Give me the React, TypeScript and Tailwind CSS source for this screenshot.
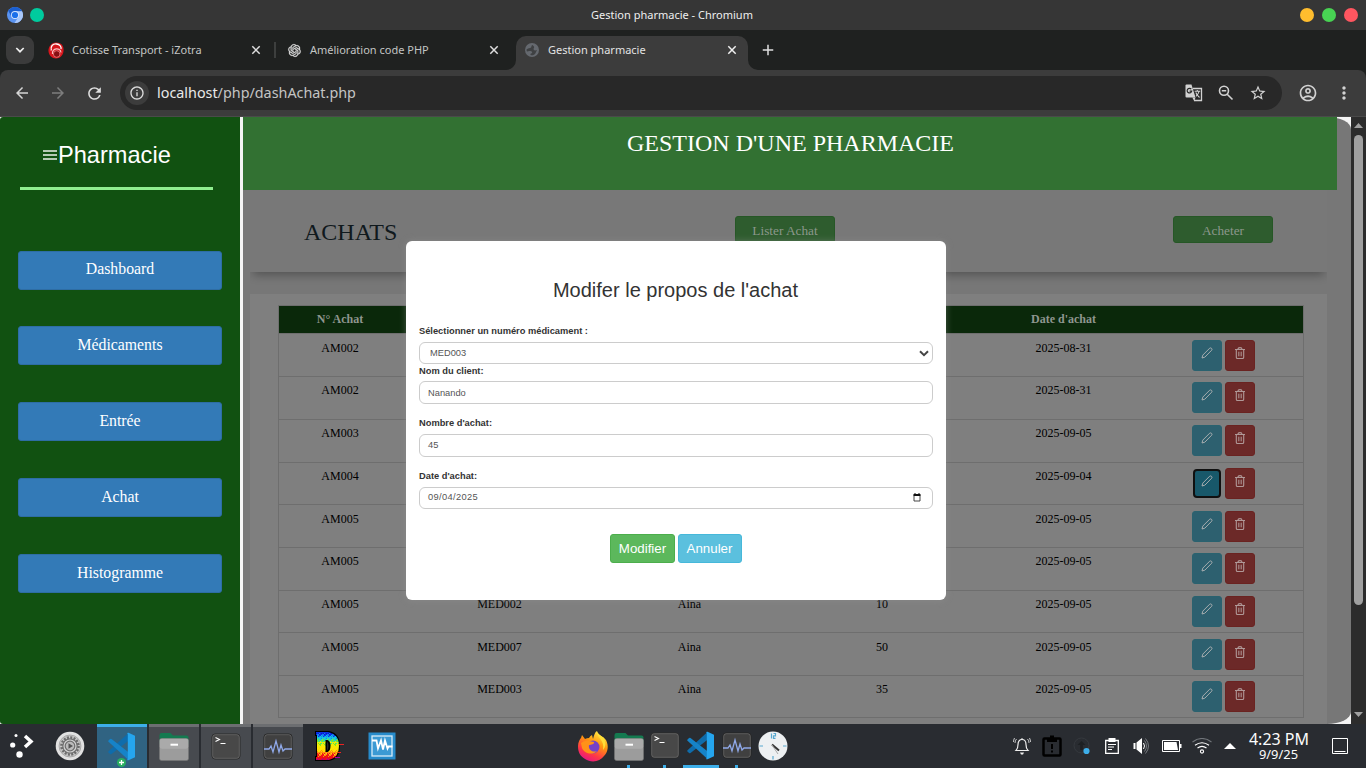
import React from "react";
import { MdArrowBack, MdArrowForward, MdRefresh, MdInfoOutline, MdStarBorder, MdMoreVert, MdAdd, MdOutlineAccountCircle } from "react-icons/md";
import { RiOpenaiFill } from "react-icons/ri";

const sans = "font-['Liberation_Sans',sans-serif]";
const serif = "font-['Liberation_Serif',serif]";

/* ---------- browser chrome ---------- */

function TitleBar() {
  return (
    <div className="flex h-[30px] items-center bg-[#363636] text-[11px] text-[#efefef]">
      <div className="flex w-[200px] items-center gap-[7px] pl-[7px]">
        <svg width="16" height="16" viewBox="0 0 16 16">
          <circle cx="8" cy="8" r="8" fill="#5a93f0" />
          <path d="M8 4.2h7A8 8 0 0 0 1.2 3.8L4.7 10z" fill="#1b5fd0" />
          <path d="M15 4.2H8l3.3 5.7L7.6 16A8 8 0 0 0 15 4.2z" fill="#a9c8fb" />
          <circle cx="8" cy="8" r="4" fill="#d5e4fd" />
          <circle cx="8" cy="8" r="3.1" fill="#1a6fea" />
        </svg>
        <div className="h-[14px] w-[14px] rounded-full bg-[#00cb9e]" />
      </div>
      <div className="flex-1 pr-[44px] text-center">Gestion pharmacie - Chromium</div>
      <div className="flex w-[178px] items-center justify-end gap-2 pr-2">
        <div className="h-[14px] w-[14px] rounded-full bg-[#ffbd2e]" />
        <div className="h-[14px] w-[14px] rounded-full bg-[#48d353]" />
        <div className="h-[14px] w-[14px] rounded-full bg-[#ff5660]" />
      </div>
    </div>
  );
}

function TabClose({ color }: { color: string }) {
  return (
    <svg width="14" height="14" viewBox="0 0 14 14">
      <path d="M3.300 3.300l7.400 7.400M10.700 3.300l-7.400 7.400" stroke={color} strokeWidth="1.500" />
    </svg>
  );
}

function TabStrip() {
  return (
    <div className="flex h-[40px] items-center bg-[#1f2120] text-[11px] text-[#c3c5c4]">
      <div className="ml-[6px] flex h-7 w-7 items-center justify-center rounded-[9px] bg-[#3b3b3b]">
        <svg width="10" height="8" viewBox="0 0 10 8"><path d="M1.300 2L5 5.700 8.700 2" fill="none" stroke="#eee" strokeWidth="1.700" /></svg>
      </div>
      <div className="flex w-[240px] items-center pl-[14px] pr-[11px]">
        <svg width="16" height="17" viewBox="0 0 16 17">
          <path d="M8 .5c5 0 7.800 3 7.600 7.500C15.500 13.500 12 16.500 8 16.500S1 13.500.5 9.500 3 .5 8 .5z" fill="#d8161c" />
          <path d="M3.300 8.500C2 4 5 1.700 8.500 2s5 2.800 4.500 5" fill="none" stroke="#fff" strokeWidth="1.300" />
          <path d="M4.500 12c-1-6 8-7 8.500-1.500" fill="none" stroke="#f6c4c4" strokeWidth="1.200" />
          <circle cx="8.700" cy="12" r="3.300" fill="#870e12" stroke="#ec8585" strokeWidth=".8" />
        </svg>
        <span className="ml-2 flex-1 whitespace-nowrap">Cotisse Transport - iZotra</span>
        <TabClose color="#dedede" />
      </div>
      <div className="h-4 w-[2px] bg-[#3d3f3e]" />
      <div className="flex w-[240px] items-center pl-[11px] pr-[15px]">
        <RiOpenaiFill size={15} color="#e2e2e2" stroke="#e2e2e2" strokeWidth={0.5} />
        <span className="ml-2 flex-1 whitespace-nowrap">Amélioration code PHP</span>
        <TabClose color="#dedede" />
      </div>
      <div className="relative flex h-[34px] w-[232px] items-center self-end rounded-t-[10px] bg-[#3c3c3c] pb-[6px] pl-[9px] pr-[9px] text-[#e3e3e3]">
        <svg className="absolute bottom-0 -left-[10px]" width="10" height="10"><path d="M10 0A10 10 0 0 1 0 10H10z" fill="#3c3c3c" /></svg>
        <svg className="absolute bottom-0 -right-[10px]" width="10" height="10"><path d="M0 0A10 10 0 0 0 10 10H0z" fill="#3c3c3c" /></svg>
        <svg width="14" height="14" viewBox="0 0 14 14">
          <circle cx="7" cy="7" r="7" fill="#65696f" />
          <path d="M7.500 2C6 2.200 6.800 3.900 6 4.600 5 5.400 3 5.200 1.500 6.500c0 .8.200 1.400.5 2 1.800-.9 4.200-.8 5 .3.600 1-.4 1.700-1.500 2v1.300c2 .6 4-.1 4.800-1.600L12 7c-1.500.800-2.900.6-3.400-.6-.3-1 .7-1.400.5-2.400-.2-.8-.9-1.300-1.600-2z" fill="#3f4143" />
        </svg>
        <span className="ml-[9px] flex-1 whitespace-nowrap">Gestion pharmacie</span>
        <TabClose color="#f0f0f0" />
      </div>
      <div className="ml-[11px]"><MdAdd size={18} color="#e0e0e0" /></div>
    </div>
  );
}

function TranslateIcon() {
  return (
    <svg width="18" height="18" viewBox="0 0 18 18">
      <path d="M8 4.500h8.500v12H9" fill="none" stroke="#d2d2d2" strokeWidth="1.300" />
      <path d="M1.500.5h5l4 13h-9q-1 0-1-1v-11q0-1 1-1z" fill="#d2d2d2" />
      <path d="M7.300 13.500h3.200l-1.200 3.700z" fill="#d2d2d2" />
      <path d="M6.300 5.200a2.300 2.300 0 1 0 .4 2H4.600" fill="none" stroke="#282828" strokeWidth="1.200" />
      <path d="M9.700 7.300h5.500M12.300 6v1.300M14 7.500q-.7 3-3 4.800M10.800 8.500q1.200 2.700 3.700 5" fill="none" stroke="#d2d2d2" strokeWidth="1.100" />
    </svg>
  );
}

function Toolbar() {
  return (
    <div className="bg-[#1f2120]">
      <div className="flex h-[47px] items-center rounded-t-[8px] border-b border-[#4a4a4a] bg-[#3c3c3c]">
        <div className="flex w-[120px] items-center gap-[18px] pl-[13px]">
          <MdArrowBack size={18} color="#d5d5d5" />
          <MdArrowForward size={18} color="#7d7d7d" />
          <MdRefresh size={19} color="#dedede" />
        </div>
        <div className="flex h-[34px] w-[1162px] items-center rounded-full bg-[#282828] pl-[5px] pr-[15px]">
          <div className="flex h-6 w-6 items-center justify-center rounded-full bg-[#3c3c3c]">
            <MdInfoOutline size={16} color="#dcdcdc" />
          </div>
          <div className="ml-2 flex-1 text-[14.350px] text-[#c4c4c4]"><span className="text-[#e9e9e9]">localhost</span>/php/dashAchat.php</div>
          <div className="flex items-center gap-[15px] text-[#d2d2d2]">
            <TranslateIcon />
            <svg width="16" height="16" viewBox="0 0 16 16" fill="none" stroke="#d2d2d2" strokeWidth="1.600">
              <circle cx="6" cy="5.800" r="4.500" /><path d="M9.200 9.200l5.300 5.300M3.800 5.800h4.400" />
            </svg>
            <MdStarBorder size={18} />
          </div>
        </div>
        <div className="ml-[16px] flex items-center gap-[16px] text-[#d2d2d2]">
          <MdOutlineAccountCircle size={20} />
          <MdMoreVert size={20} />
        </div>
      </div>
    </div>
  );
}

/* ---------- page ---------- */

const menu = [
  { label: "Dashboard", cls: "mt-0 leading-[34px]" },
  { label: "Médicaments", cls: "mt-[36px] leading-[36px]" },
  { label: "Entrée", cls: "mt-[37px] leading-[36px]" },
  { label: "Achat", cls: "mt-[37px] leading-[36px]" },
  { label: "Histogramme", cls: "mt-[37px] leading-[36px]" },
];

function Sidebar() {
  return (
    <aside className="w-[240px] shrink-0 rounded-l-[3px] bg-[#115111]">
      <div className={`mx-[20px] flex h-[73px] w-[193px] items-start border-b-[3px] border-[#90ee90] pl-[23px] pt-[22px] text-[23.600px] leading-[32px] text-white ${sans}`}>
        <svg className="mt-[11px] mr-px shrink-0" width="14" height="10" viewBox="0 0 14 10">
          <path d="M0 1h14M0 5h14M0 9h14" stroke="#b5cab5" strokeWidth="2" />
        </svg>
        Pharmacie
      </div>
      <nav className={`mx-[18px] mt-[61px] text-[15.800px] text-white ${serif}`}>
        {menu.map((m) => (
          <div key={m.label} className={`h-[39px] rounded-[3px] border border-[#2e6da4] bg-[#337ab7] text-center ${m.cls}`}>{m.label}</div>
        ))}
      </nav>
    </aside>
  );
}

function PencilIcon() {
  return (
    <svg width="12" height="12" viewBox="0 0 12 12" fill="none" stroke="#a6adaf" strokeWidth="1">
      <path d="M1 11l.8-2.900L8.700 1.200q1.100-.7 1.900.2.800.900.1 1.800L3.800 10.200z" strokeLinejoin="round" />
    </svg>
  );
}
function TrashIcon() {
  return (
    <svg width="12" height="12" viewBox="0 0 12 12" fill="none" stroke="#b09897" strokeWidth="1">
      <path d="M1 2.500h10M4 2.300Q4 .6 6 .6t2 1.700M2.300 2.700v7.600q0 1.200 1.200 1.200h5q1.200 0 1.200-1.200V2.700" strokeWidth="1.100" />
      <path d="M4.500 4.700v4.600M6 4.700v4.600M7.500 4.700v4.600" strokeWidth=".7" />
    </svg>
  );
}

type Row = { n: string; med?: string; client?: string; qty?: string; date: string; cls: string; focus?: boolean };
const rows: Row[] = [
  { n: "AM002", date: "2025-08-31", cls: "h-[43px] pt-[6px]" },
  { n: "AM002", date: "2025-08-31", cls: "h-[43px] pt-[5px]" },
  { n: "AM003", date: "2025-09-05", cls: "h-[43px] pt-[5px]" },
  { n: "AM004", date: "2025-09-04", cls: "h-[42px] pt-[5px]", focus: true },
  { n: "AM005", date: "2025-09-05", cls: "h-[43px] pt-[6px]" },
  { n: "AM005", date: "2025-09-05", cls: "h-[43px] pt-[5px]" },
  { n: "AM005", med: "MED002", client: "Aina", qty: "10", date: "2025-09-05", cls: "h-[42px] pt-[5px]" },
  { n: "AM005", med: "MED007", client: "Aina", qty: "50", date: "2025-09-05", cls: "h-[43px] pt-[6px]" },
  { n: "AM005", med: "MED003", client: "Aina", qty: "35", date: "2025-09-05", cls: "h-[42px] pt-[5px]" },
];
const cols = "grid grid-cols-[122px_196px_184px_202px_161px_159px]";

function PurchaseTable() {
  return (
    <div className={`w-[1026px] border border-[#6e6e6e] text-center text-[12px] text-black ${serif}`}>
      <div className={`${cols} h-[27px] bg-[#0a280a] font-bold leading-[26px] text-[#8f968f]`}>
        <span>N° Achat</span><span /><span /><span /><span>Date d'achat</span><span />
      </div>
      {rows.map((r, i) => (
        <div key={i} className={`${cols} border-t border-[#6e6e6e] leading-[16px] ${r.cls}`}>
          <span>{r.n}</span>
          <span className="pl-px">{r.med}</span>
          <span className="pl-px">{r.client}</span>
          <span>{r.qty}</span>
          <span>{r.date}</span>
          <div className="flex justify-center gap-[3px]">
            {r.focus ? (
              <div className="h-[31px] w-[30px] p-px">
                <div className="flex h-[29px] w-[28px] justify-center rounded-[4px] border-2 border-[#101010] bg-[#18586a] pt-[4px]"><PencilIcon /></div>
              </div>
            ) : (
              <div className="flex h-[31px] w-[30px] justify-center rounded-[3px] border border-[#2a626f] bg-[#2d606f] pt-[6px]"><PencilIcon /></div>
            )}
            <div className="flex h-[31px] w-[30px] justify-center rounded-[3px] border border-[#6a2321] bg-[#6c2928] pt-[6px]"><TrashIcon /></div>
          </div>
        </div>
      ))}
    </div>
  );
}

const label = "text-[9.300px] font-bold text-[#333]";
const field = "flex w-full items-center rounded-[6px] border border-[#ccc] bg-white text-[9.300px] text-[#555]";

function EditDialog() {
  return (
    <div className={`absolute left-[163px] top-[124.400px] h-[358.400px] w-[540px] rounded-[6px] bg-white px-[13px] pt-[34.600px] text-[#333] shadow-[0_0_7px_rgba(150,150,150,0.45)] ${sans}`}>
      <h2 className="pr-px text-center text-[20px] leading-[28px]">Modifer le propos de l'achat</h2>
      <div className={`${label} mt-[20px] h-[14px] leading-[14px]`}>Sélectionner un numéro médicament :</div>
      <div className={`${field} mt-[4px] h-[22.500px] justify-between pl-[10px] pr-[3px]`}>
        <span className="pt-px">MED003</span>
        <svg width="10" height="7" viewBox="0 0 10 7"><path d="M1 1.200l4 3.900 4-3.900" fill="none" stroke="#444" strokeWidth="2" /></svg>
      </div>
      <div className={`${label} mt-[0.500px] h-[12px] leading-[12px]`}>Nom du client:</div>
      <div className={`${field} mt-[4px] h-[23px] pl-[8px]`}><span className="pt-[2px]">Nanando</span></div>
      <div className={`${label} mt-[13px] h-[12px] leading-[12px]`}>Nombre d'achat:</div>
      <div className={`${field} mt-[5px] h-[23px] pl-[8px]`}>45</div>
      <div className={`${label} mt-[13px] h-[12px] leading-[12px]`}>Date d'achat:</div>
      <div className={`${field} mt-[5px] h-[22px] justify-between pl-[8px] pr-[11px]`}>
        <span className="tracking-[0.350px]">09/04/2025</span>
        <svg className="-mt-px" width="8" height="9" viewBox="0 0 8 9"><path d="M1 1.500h6V8H1z" fill="none" stroke="#333" strokeWidth=".9" /><path d="M.6 1h6.800v2H.6zM1.500 0h1v1h-1zM5.500 0h1v1h-1z" fill="#111" /></svg>
      </div>
      <div className="mt-[25px] flex justify-center gap-[3px] text-[13.300px] text-white">
        <div className="h-[29px] w-[65px] rounded-[3px] border border-[#4cae4c] bg-[#5cb85c] text-center leading-[27px]">Modifier</div>
        <div className="h-[29px] w-[64px] rounded-[3px] border border-[#46b8da] bg-[#5bc0de] pr-px text-center leading-[27px]">Annuler</div>
      </div>
    </div>
  );
}

function PageScrollbar() {
  return (
    <div className="flex w-[15px] shrink-0 flex-col items-center bg-[#2c2c2c]">
      <svg className="mt-[6px]" width="9" height="5"><path d="M0 5l4.500-5L9 5z" fill="#a0a0a0" /></svg>
      <div className="mt-[7px] h-[470px] w-[9px] rounded-full bg-[#a0a0a0]" />
      <svg className="mt-auto mb-[7px]" width="9" height="5"><path d="M0 0l4.500 5L9 0z" fill="#a0a0a0" /></svg>
    </div>
  );
}

function Page() {
  return (
    <div className="flex h-[607px] overflow-hidden bg-[#f4f4f4]">
      <Sidebar />
      <main className="relative ml-[3px] w-[1108px] shrink-0 rounded-r-[24px_12px] bg-[#777]">
        <header className={`h-[73px] w-[1094px] bg-[#327132] pt-[12px] pl-px text-center text-[24px] leading-[28px] text-white ${serif}`}>GESTION D'UNE PHARMACIE</header>
        <div className="ml-[7px] h-[104px] w-[1077px] overflow-hidden">
          <section className={`flex h-[82px] bg-[#787878] pl-[54px] shadow-[0_6px_9px_-3px_rgba(0,0,0,0.3)] ${serif}`}>
            <h1 className="w-[431px] pt-[27px] text-[24px] leading-[30px] text-[#10191d]">ACHATS</h1>
            <div className="mt-[26px] h-[27px] w-[100px] rounded-[3px] border border-[#265726] bg-[#2e5c2e] text-center text-[13.300px] leading-[28px] text-[#8c978c]">Lister Achat</div>
            <div className="ml-[338px] mt-[26px] h-[27px] w-[100px] rounded-[3px] border border-[#265726] bg-[#2e5c2e] text-center text-[13.300px] leading-[28px] text-[#8c978c]">Acheter</div>
          </section>
        </div>
        <section className="ml-[7px] h-[430px] w-[1077px] bg-[#7f7f7f] pl-[28px] pt-[11px]">
          <PurchaseTable />
        </section>
        <EditDialog />
      </main>
      <PageScrollbar />
    </div>
  );
}

/* ---------- desktop panel ---------- */

function CodeIcon({ badge }: { badge?: boolean }) {
  return (
    <svg className="overflow-visible" width="30" height="32" viewBox="0 0 30 32">
      <path d="M21.500 2L1.500 20.300q-.6.700 0 1.300l1.600 1.500q.7.500 1.400 0L21.500 9.800z" fill="#0f6cab" />
      <path d="M21.500 29L1.500 10.700q-.6-.7 0-1.300l1.600-1.500q.7-.5 1.400 0L21.500 21.200z" fill="#1683c8" />
      <path d="M21.500 1.800l6.500 3v21.400l-6.500 3q-1 .3-1.700-.5.9.2 1-1V3.300q-.1-1.200-1-1 .7-.8 1.700-.5z" fill="#25a5ee" />
      {badge && <><circle cx="14.500" cy="31.500" r="4.500" fill="#27ae60" /><path d="M14.500 29v5M12 31.500h5" stroke="#fff" strokeWidth="1.300" /></>}
    </svg>
  );
}
function FilesIcon() {
  return (
    <svg width="32" height="30" viewBox="0 0 32 30">
      <path d="M1.500 3q0-2 2-2h9l2.500 2.500h13.500q2 0 2 2V12h-29z" fill="#147a50" />
      <rect x="1.500" y="6.500" width="29" height="22" rx="2" fill="#9c9c9c" stroke="#777" strokeWidth=".6" />
      <rect x="1.800" y="6.800" width="28.400" height="10" rx="2" fill="#aaa" />
      <path d="M12.500 12.700h7.500" stroke="#fff" strokeWidth="2" />
    </svg>
  );
}
function TerminalIcon() {
  return (
    <svg width="30" height="28" viewBox="0 0 30 28">
      <rect x="1" y="1" width="28" height="25" rx="3" fill="#484848" stroke="#2a2a2a" />
      <rect x="1.700" y="1.700" width="26.600" height="23.600" rx="2.500" fill="none" stroke="#747474" strokeWidth=".6" />
      <path d="M4.500 4.500l4 2-4 2M9.500 10.500h5" fill="none" stroke="#fff" strokeWidth="1.100" />
    </svg>
  );
}
function MonitorIcon() {
  return (
    <svg width="30" height="28" viewBox="0 0 30 28">
      <rect x="1" y="1" width="28" height="25" rx="3" fill="#404040" stroke="#242424" />
      <rect x="1.700" y="1.700" width="26.600" height="23.600" rx="2.500" fill="none" stroke="#747474" strokeWidth=".6" />
      <path d="M1 16h5l2-3 2 6 3-11 3 11 2-7 2 6 2-2h7" fill="none" stroke="#8fa8e8" strokeWidth="1.300" />
    </svg>
  );
}

const bandColors = ["#0a18c8", "#0a30e8", "#1080f0", "#10c0e8", "#38e0a0", "#80e820", "#e8ec10", "#ffea00", "#ffe600", "#ffdc00", "#ff9010", "#f01818", "#f01010", "#c00070"];
const pixels = Array.from({ length: 28 * 30 }, (_, i) => {
  const x = i % 28;
  const y = Math.floor(i / 28);
  const jitter = ((x * 7 + y * 13 + ((x * y) % 5) * 3) % 5) - 2;
  const band = Math.max(0, Math.min(bandColors.length - 1, Math.round(y / 2.2 + jitter * 0.5)));
  return { x, y, fill: bandColors[band] };
});

function PixelDIcon() {
  return (
    <svg width="32" height="32" viewBox="0 0 32 32">
      <defs><clipPath id="d-shape"><path clipRule="evenodd" d="M3 2h12q11 2 11 14T16 30H3v-3h1V5H3zM12.500 10v12h2q3-1 3-6t-3-6z" /></clipPath></defs>
      <path fillRule="evenodd" d="M2 1h14q11 2 11 15T16 31H2v-5h1V6H2zM14 11.500v9q1.500-1 1.500-4.500T14 11.500z" fill="#000" />
      <g clipPath="url(#d-shape)" shapeRendering="crispEdges">{pixels.map((p, i) => <rect key={i} x={p.x} y={p.y + 1} width="1" height="1" fill={p.fill} />)}</g>
      <path d="M26 14.500h5M25 22.500h3" stroke="#e22" />
      <path d="M22 27.500h5" stroke="#a0a" />
    </svg>
  );
}

function LauncherIcons() {
  return (
    <>
      <div className="flex w-[44px] justify-center">
        <svg width="26" height="28" viewBox="0 0 26 28" fill="#fff">
          <circle cx="7" cy="3.500" r="1.500" /><circle cx="3.700" cy="13" r="2.600" /><circle cx="10.500" cy="22.500" r="3.200" />
          <path d="M16 4l6 5.500-6 5.500" fill="none" stroke="#fff" strokeWidth="3.500" />
        </svg>
      </div>
      <div className="mr-px flex w-[52px] justify-center">
        <svg width="30" height="30" viewBox="0 0 30 30">
          <circle cx="15" cy="15" r="14.300" fill="#e1e1e1" />
          <circle cx="15" cy="15" r="11" fill="#c9c9c9" stroke="#8c8c8c" strokeWidth=".6" />
          <circle cx="15" cy="15" r="8.500" fill="none" stroke="#6d6d6d" strokeWidth="2.600" strokeDasharray="2 1.337" />
          <circle cx="15" cy="15" r="7.200" fill="#d2d2d2" stroke="#6d6d6d" strokeWidth="1.200" />
          <circle cx="15" cy="15" r="4.800" fill="#bbb" stroke="#6d6d6d" strokeWidth="1.200" />
          <path d="M13.500 12.200v5.600l4.500-2.800z" fill="#555" />
        </svg>
      </div>
    </>
  );
}

const openTask = "flex h-[44px] w-[50px] items-center justify-center border-t-[3px] pb-px";

function Taskbar() {
  return (
    <footer className="flex h-[44px] items-center bg-[#292c31] text-[#fcfcfc]">
      <LauncherIcons />
      <div className="flex gap-[2px] bg-[#292c31]">
        <div className={`${openTask} border-[#3daee9] bg-[#306382]`}><CodeIcon badge /></div>
        <div className={`${openTask} border-[#6c6e71] bg-[#474a4f]`}><FilesIcon /></div>
        <div className={`${openTask} border-[#6c6e71] bg-[#474a4f]`}><TerminalIcon /></div>
        <div className={`${openTask} border-[#6c6e71] bg-[#474a4f]`}><MonitorIcon /></div>
      </div>
      <div className="flex w-[52px] justify-center"><PixelDIcon /></div>
      <div className="flex w-[54px] justify-center">
        <svg width="28" height="28" viewBox="0 0 28 28">
          <rect x=".5" y=".5" width="27" height="27" fill="#278bcb" />
          <rect x="4" y="4" width="20" height="20" fill="#3c9ad4" stroke="#d7ecf8" strokeWidth="1.300" />
          <path d="M4 8.500h4.500l1.500 8 3-8 2 9 2-9 2.500 8 1-2h4" fill="none" stroke="#fff" strokeWidth="1.800" />
        </svg>
      </div>
      <div className="ml-[166px] flex h-[44px]">
        <div className="flex w-9 items-center justify-center">
          <svg width="32" height="33" viewBox="0 0 32 33">
            <defs>
              <linearGradient id="fox" x1=".8" y1="0" x2=".3" y2="1"><stop offset="0" stopColor="#fff44f" /><stop offset=".4" stopColor="#ff980e" /><stop offset=".75" stopColor="#ff3647" /><stop offset="1" stopColor="#e31587" /></linearGradient>
            </defs>
            <path d="M1 16C1 12 3 9 4 8l1-3 3 4q2-1 4-1 1-2 3-3l1 4c1-4 2-7 4-8 1 4 5 5 7 7l2 2c3 6 2 12-2 16C23 32 14 33 8 29 3 26 1 22 1 16z" fill="url(#fox)" />
            <circle cx="16" cy="17" r="6.500" fill="#7542c8" />
            <path d="M4 13q4-3 8-2l5 1c1 2-3 3-5 3-1 4 3 8 8 6-5 5-13 2-15-3z" fill="#ff9218" />
            <path d="M20 2c0 6 8 8 6 18 3-3 3-8 1-12-2-2-5-3-7-6z" fill="#ffdf38" />
          </svg>
        </div>
        <div className="flex w-9 flex-col items-center justify-between pt-[8px]"><FilesIcon /><i className="mr-px h-[3px] w-[3px] bg-[#3daee9]" /></div>
        <div className="flex w-9 flex-col items-center justify-between pt-[8px]"><TerminalIcon /><i className="mr-px h-[3px] w-[3px] bg-[#3daee9]" /></div>
        <div className="relative flex w-9 flex-col items-center pt-[6px]"><CodeIcon /><i className="absolute bottom-0 h-[3px] w-9 bg-[#3daee9]" /></div>
        <div className="flex w-9 flex-col items-center justify-between pt-[8px]"><MonitorIcon /><i className="mr-px h-[3px] w-[3px] bg-[#3daee9]" /></div>
        <div className="flex w-9 items-center justify-center">
          <svg width="30" height="30" viewBox="0 0 30 30">
            <circle cx="15" cy="15" r="14.500" fill="#edf0f2" />
            <path d="M13.500 2.500v5M15.500 2.500h2v2.300h-2v2.500h2M1.500 15H5M25 15h3.500M15 25v3.500" fill="none" stroke="#58a8cf" strokeWidth="1.200" />
            <path d="M14 13.500l7 6" stroke="#333" strokeWidth="2" /><path d="M14 14l6 9" stroke="#aaa" strokeWidth="1" />
          </svg>
        </div>
      </div>
      <SystemTray />
    </footer>
  );
}

function SystemTray() {
  return (
    <div className="ml-[215px] flex items-center">
      <div className="flex w-[31px] justify-center">
        <svg width="18" height="18" viewBox="0 0 18 18" fill="none" stroke="#eee">
          <path d="M3 13.500h12c-2-2-2-4-2-6 0-3-1.500-5-4-5s-4 2-4 5c0 2 0 4-2 6z" strokeWidth="1.200" /><path d="M9 1v2" />
          <path d="M7 15.500h4l-1 2H8z" fill="#eee" stroke="none" /><path d="M3.500 2Q2 3.500 2 6M1.500 1Q.5 3 .5 5M14.500 2Q16 3.500 16 6M16.500 1q1 2 1 4" strokeWidth=".8" />
        </svg>
      </div>
      <div className="flex w-[30px] justify-center">
        <svg width="20" height="22" viewBox="0 0 20 22"><rect x="1.500" y="3.500" width="17" height="17" rx="1" fill="none" stroke="#000" strokeWidth="2.500" /><path d="M5 7V3h3V.5h4V3h3v4z" fill="#000" /><path d="M10 9v5M10 15.500v2" stroke="#000" strokeWidth="2" /></svg>
      </div>
      <div className="flex w-[30px] justify-center">
        <svg width="18" height="18" viewBox="0 0 18 18"><circle cx="8.500" cy="8.500" r="7.500" fill="none" stroke="#35393e" /><path d="M8.500 4L4.500 8h2.700v5h2.600V8h2.700z" fill="#1d2023" /><circle cx="13.500" cy="14" r="3.100" fill="#3daee9" /></svg>
      </div>
      <div className="flex w-[29px] justify-center">
        <svg width="14" height="16" viewBox="0 0 14 16"><path d="M.7 2.500h12.600v12.800H.7z" fill="none" stroke="#fff" strokeWidth="1.300" /><path d="M3.500 0h7v4h-7z" fill="#fff" /><path d="M3 6.500h8M3 9h6M3 11.500h4" stroke="#fff" strokeWidth="1.200" /></svg>
      </div>
      <div className="flex w-[31px] justify-center">
        <svg width="17" height="18" viewBox="0 0 17 18"><path d="M.5 6h2v6h-2zM3.500 5.500L9 1v16l-5.500-4.500z" fill="#fff" /><path d="M10.500 6q2 3 0 6" fill="none" stroke="#fff" /><path d="M11.500 3.500q4 5.500 0 11M12.500 1.500q6 7.500 0 15" fill="none" stroke="#777b80" /></svg>
      </div>
      <div className="flex w-[30px] justify-center">
        <svg width="20" height="12" viewBox="0 0 20 12"><path d="M.5.500h17v11H.500z" fill="none" stroke="#fff" /><path d="M2 2h12.500l1.500 8H2z" fill="#fff" /><path d="M18 4h1.500v4H18z" fill="#fff" /></svg>
      </div>
      <div className="flex w-[30px] justify-center">
        <svg width="20" height="16" viewBox="0 0 20 16" fill="none" strokeWidth="1.100"><path d="M.5 4q9.500-7 19 0" stroke="#71757a" /><path d="M3 7.200q7-5 14 0M5.500 10q4.500-3.300 9 0" stroke="#fff" /><circle cx="10" cy="13.500" r="1.600" stroke="#fff" /></svg>
      </div>
      <div className="flex w-[26px] justify-center"><svg width="12" height="6"><path d="M0 6l6-6 6 6z" fill="#fff" /></svg></div>
      <div className="w-[71px] text-center">
        <div className="pl-px text-[16px] leading-[16px]">4:23 PM</div>
        <div className="text-[12.900px] leading-[14px]">9/9/25</div>
      </div>
      <div className="flex w-[52px] justify-center"><svg width="16" height="16"><path d="M.5.500h15v15H.500zM2.500 13.500h11" fill="none" stroke="#fff" /></svg></div>
    </div>
  );
}

export default function App() {
  return (
    <div className="h-[768px] w-[1366px] overflow-hidden bg-[#292c31] font-['Noto_Sans',sans-serif]">
      <TitleBar />
      <TabStrip />
      <Toolbar />
      <Page />
      <Taskbar />
    </div>
  );
}
